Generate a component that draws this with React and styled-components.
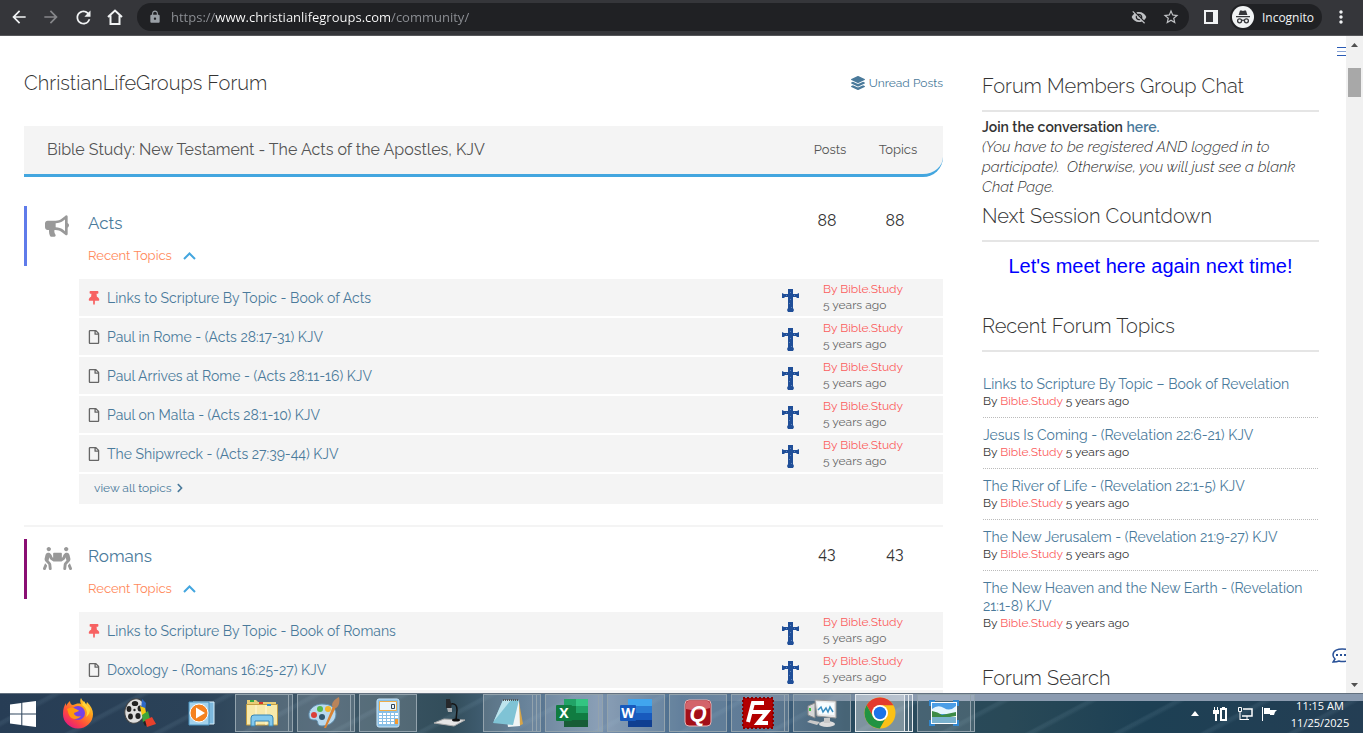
import React, {useState} from "react";
import styled, {createGlobalStyle} from "styled-components";
import {FaBullhorn, FaPeopleCarry, FaLayerGroup, FaThumbtack, FaRegFile, FaChevronRight} from "react-icons/fa";
import {MdArrowBack, MdArrowForward, MdRefresh, MdLock, MdVisibilityOff, MdStarBorder, MdMoreVert} from "react-icons/md";

const boards = [
    {
        name: "Acts",
        color: "#5f7bea",
        icon: <FaBullhorn size={24} />,
        posts: 88,
        topics: 88,
        recent: [
            {title: "Links to Scripture By Topic - Book of Acts", pinned: true},
            {title: "Paul in Rome - (Acts 28:17-31) KJV"},
            {title: "Paul Arrives at Rome - (Acts 28:11-16) KJV"},
            {title: "Paul on Malta - (Acts 28:1-10) KJV"},
            {title: "The Shipwreck - (Acts 27:39-44) KJV"},
        ],
        more: true,
    },
    {
        name: "Romans",
        color: "#8a0f73",
        icon: <FaPeopleCarry size={29} />,
        posts: 43,
        topics: 43,
        recent: [
            {title: "Links to Scripture By Topic - Book of Romans", pinned: true},
            {title: "Doxology - (Romans 16:25-27) KJV"},
        ],
    },
];

const latest = [
    "Links to Scripture By Topic – Book of Revelation",
    "Jesus Is Coming - (Revelation 22:6-21) KJV",
    "The River of Life - (Revelation 22:1-5) KJV",
    "The New Jerusalem - (Revelation 21:9-27) KJV",
    "The New Heaven and the New Earth - (Revelation 21:1-8) KJV",
];

function BrowserBar() {
    const [url, setUrl] = useState("https://www.christianlifegroups.com/community/");

    return (
        <Toolbar>
            <ToolButton aria-label="Back"><MdArrowBack size={20} /></ToolButton>
            <ToolButton aria-label="Forward" $dim><MdArrowForward size={20} /></ToolButton>
            <ToolButton aria-label="Reload"><MdRefresh size={21} /></ToolButton>
            <ToolButton aria-label="Home">
                <svg width="16" height="16" viewBox="0 0 16 16"><path d="M1 8l7-6.500L15 8M3.500 6.500V15h9V6.500" fill="none" stroke="#f1f3f4" strokeWidth="2" /></svg>
            </ToolButton>
            <AddressBar>
                <MdLock size={14} color="#9aa0a6" />
                <AddressInput aria-label="Address" value={url} onChange={(e) => setUrl(e.target.value)} />
                <ToolButton aria-label="Tracking protection" $soft><MdVisibilityOff size={16} /></ToolButton>
                <ToolButton aria-label="Bookmark" $soft><MdStarBorder size={18} /></ToolButton>
            </AddressBar>
            <ToolGroup>
                <ToolButton aria-label="Side panel">
                    <svg width="14" height="14" viewBox="0 0 14 14"><path fill="#f1f3f4" fillRule="evenodd" d="M0 0h14v14H0zM2 2v10h7V2z" /></svg>
                </ToolButton>
                <IncognitoBadge>
                    <svg width="22" height="22" viewBox="0 0 22 22">
                        <circle cx="11" cy="11" r="11" fill="#f1f3f4" />
                        <path fill="#35363a" d="M8 4.500h1.600l1.400.5 1.400-.5H14L15.400 9H6.600zM4 10h14v1.300H4z" />
                        <g fill="none" stroke="#35363a" strokeWidth="1.300">
                            <circle cx="7.600" cy="14.800" r="2" />
                            <circle cx="14.400" cy="14.800" r="2" />
                            <path d="M9.600 14.500q1.400-.8 2.800 0" />
                        </g>
                    </svg>
                    Incognito
                </IncognitoBadge>
                <ToolButton aria-label="Menu"><MdMoreVert size={20} /></ToolButton>
            </ToolGroup>
        </Toolbar>
    );
}

function Cross() {
    return (
        <svg width="17" height="23" viewBox="0 0 17 23">
            <path fill="#1f4e98" d="M6 0h5v5h4l2-1v5h-2l-1-1h-3v11l1 2-1 2H6l-1-2 1-2V8H3L2 9H0V4l2 1h4z" />
            <path fill="#5d83bd" d="M8 3h1v1H8zM4 6h1v1H4zM12 6h1v1h-1zM8 10h1v1H8zM7 14h1v1H7zM9 18h1v1H9z" />
        </svg>
    );
}

function Board({board}) {
    const [open, setOpen] = useState(true);

    return (
        <BoardSection>
            <BoardHeader $color={board.color}>
                <BoardIcon>{board.icon}</BoardIcon>
                <BoardTitle>
                    <h3><a href="#board">{board.name}</a></h3>
                    <RecentToggle aria-expanded={open} onClick={() => setOpen(!open)}>
                        Recent Topics
                        <svg width="13" height="8" viewBox="0 0 13 8"><path d="M1 7l5.500-5.500L12 7" fill="none" stroke="#43a6df" strokeWidth="2" /></svg>
                    </RecentToggle>
                </BoardTitle>
                <Count>{board.posts}</Count>
                <Count>{board.topics}</Count>
            </BoardHeader>
            {open && (
                <TopicList>
                    {board.recent.map((topic) => (
                        <TopicRow key={topic.title}>
                            {topic.pinned ? <FaThumbtack size={14} color="#f76262" /> : <FaRegFile size={14} color="#666" />}
                            <TopicLink href="#topic">{topic.title}</TopicLink>
                            <CrossBox><Cross /></CrossBox>
                            <Author>
                                <a href="#member">By Bible.Study</a>
                                <span>5 years ago</span>
                            </Author>
                        </TopicRow>
                    ))}
                    <ViewAll>
                        {board.more && <a href="#all">view all topics <FaChevronRight size={10} /></a>}
                    </ViewAll>
                </TopicList>
            )}
        </BoardSection>
    );
}

function Sidebar() {
    return (
        <Side>
            <SideHeading>Forum Members Group Chat</SideHeading>
            <ChatText>
                <b>Join the conversation <a href="#chat">here.</a></b>
                <br />
                <i>(You have to be registered AND logged in to participate).&nbsp; Otherwise, you will just see a blank Chat Page.</i>
            </ChatText>
            <SideHeading>Next Session Countdown</SideHeading>
            <Countdown>Let's meet here again next time!</Countdown>
            <SideHeading>Recent Forum Topics</SideHeading>
            <LatestList>
                {latest.map((title) => (
                    <li key={title}>
                        <a href="#topic">{title}</a>
                        <p>By <a href="#member">Bible.Study</a> 5 years ago</p>
                    </li>
                ))}
            </LatestList>
            <SideHeading>Forum Search</SideHeading>
        </Side>
    );
}

const WindowsLogo = () => (
    <svg width="26" height="26" viewBox="0 0 26 26" fill="#fff"><path d="M0 3.500l11.300-1.600v10.600H0zM12.300 1.800L26 0v12.500H12.300zM0 13.500h11.300v10.600L0 22.500zM12.300 13.500H26V26l-13.700-1.800z" /></svg>
);

const icons = {
    firefox: (
        <svg width="32" height="32" viewBox="0 0 32 32">
            <defs>
                <linearGradient id="fx" x1="1" y1="0" x2="0.2" y2="1"><stop offset="0" stopColor="#fff44f" /><stop offset=".35" stopColor="#ffa31a" /><stop offset=".7" stopColor="#ff4a3d" /><stop offset="1" stopColor="#e31587" /></linearGradient>
            </defs>
            <path fill="url(#fx)" d="M19 1c1 3 4 4 5 7l1-3c4 4 6 8 6 12a15 14.500 0 0 1-30 0c0-5 1-8 3-11v3c1-2 2-3 4-5 0 2 1 4 3 4 3-1 5-2 8-1-1-2-1-4 0-6z" />
            <circle cx="16" cy="16" r="7" fill="#7542e5" />
            <path fill="#ff980e" d="M5 12c3-2 6-2 9 0 1 1 3 1 3 2l-5 2c0 3 4 4 7 3-3 4-10 4-12-1-1-2-1-4-2-6z" />
            <path fill="#ffd43a" d="M20 8c5 3 6 8 4 12 3-2 4-5 4-8-2-3-5-5-6-8z" />
        </svg>
    ),
    movie: (
        <svg width="32" height="30" viewBox="0 0 32 30">
            <ellipse cx="11" cy="13" rx="10" ry="12.500" fill="#dedede" stroke="#444" transform="rotate(15 11 13)" />
            <g fill="#222"><ellipse cx="11" cy="5.500" rx="3.200" ry="2.600" /><ellipse cx="5" cy="11" rx="2.400" ry="3" /><ellipse cx="16" cy="10.500" rx="2.400" ry="3" /><ellipse cx="6.500" cy="18.500" rx="2.400" ry="3" /><ellipse cx="14" cy="18" rx="2.600" ry="3" /><circle cx="10.500" cy="12" r="1.200" /></g>
            <path fill="#2d68c8" d="M18 1l4 4-1 9-4-2z" />
            <path fill="#f3c914" d="M16 8l5 2 2 9-5-1z" />
            <path fill="#3fa53a" d="M18 17l6-4 2 8-7 4z" />
            <path fill="#222" d="M19 24l5-3 2 4-5 3z" />
            <path fill="#e8412c" d="M21 22l7-3 4 7-9 3z" />
        </svg>
    ),
    player: (
        <svg width="28" height="28" viewBox="0 0 28 28">
            <path fill="#7db8dd" stroke="#d9effb" d="M5 3h21v22H5z" />
            <path fill="#a3d2ec" stroke="#4b93c0" d="M1 3h20v23H1z" />
            <circle cx="11" cy="14" r="9" fill="#f58220" stroke="#fff" />
            <path fill="#fff" d="M8 8.500v11l9-5.500z" />
        </svg>
    ),
    explorer: (
        <svg width="34" height="32" viewBox="0 0 34 32">
            <path fill="#e9cd78" d="M2 3h9l2 2h18v22H2z" />
            <path fill="#f8e9ab" stroke="#c59e42" d="M1.500 7.500h31V28h-31z" />
            <path stroke="#fff8d9" d="M11 8v20M21 8v20" />
            <path fill="#37a840" d="M5 3h4v2H5z" /><path fill="#d8392b" d="M14 5h4v2h-4z" /><path fill="#2a8ddc" d="M22 7h4v2h-4z" />
            <path fill="#83c9ee" stroke="#3684b4" d="M6 29V21q0-3 3-3h16q3 0 3 3v8h-4v-5H10v5z" />
        </svg>
    ),
    paint: (
        <svg width="34" height="32" viewBox="0 0 34 32">
            <path fill="#b8d9ef" stroke="#5d8cab" d="M15 7C7 7 1 13 2 19c0 4 4 4 7 4 3 1 0 6 6 6 9 0 14-6 14-12 0-7-6-10-14-10z" />
            <circle cx="7" cy="18" r="3" fill="#db3f39" /><circle cx="13" cy="12" r="3" fill="#55b74a" /><circle cx="21" cy="12" r="3" fill="#f2b52c" /><circle cx="15" cy="20" r="3" fill="#32576f" />
            <path fill="#d98334" d="M26 9l3 1-10 21h-2z" /><path fill="#b9845b" d="M25 9c0-4 2-6 7-9 1 5 0 9-3 11z" />
        </svg>
    ),
    calculator: (
        <svg width="24" height="30" viewBox="0 0 24 30">
            <rect x="1" y="1" width="22" height="28" rx="2" fill="#88bfe6" stroke="#cbe6f8" />
            <path fill="#eaf5fb" stroke="#ecad4b" d="M3.500 3.500h17v9h-17z" />
            <path fill="none" stroke="#345" d="M15.500 6.500h3v4h-3z" />
            <g fill="#fff">{[15, 18, 21, 24].map((y) => [3, 7, 11, 15, 19].map((x) => <rect key={x + "-" + y} x={x} y={y} width="3" height="2" />))}</g>
            <path fill="#f5992e" d="M19 21h3v5h-3z" />
        </svg>
    ),
    microscope: (
        <svg width="34" height="30" viewBox="0 0 34 30">
            <path fill="#e6e6e6" stroke="#aaa" d="M1 25l10-4 21 1-11 6z" />
            <path fill="none" stroke="#141414" strokeWidth="1.500" d="M17 6c6-1 7 2 7 6l-1 10" />
            <path fill="#26282b" d="M13 1h4l1 4h1l-1 5h-5z" /><path fill="#a9adb0" d="M14 10h5v4h-4z" />
            <ellipse cx="23" cy="22" rx="4" ry="1.500" fill="#111" />
        </svg>
    ),
    notepad: (
        <svg width="34" height="30" viewBox="0 0 34 30">
            <path fill="#d6a448" d="M28 4l4 22-4 2-2-23z" />
            <path fill="#f0f5f6" d="M13 3h15l1 25-12 1z" />
            <path fill="#7fc3d5" d="M12 2h16l-6 25-20-2z" /><path fill="#bde4ed" d="M12 2h8L3 23l-1 2z" />
            <path stroke="#555" strokeWidth="2" strokeDasharray="1 1" d="M12 2h16" />
        </svg>
    ),
    excel: (
        <svg width="32" height="28" viewBox="0 0 32 28">
            <path fill="#21a366" d="M8 0h12v7H8z" /><path fill="#33c481" d="M20 0h12v7H20z" /><path fill="#107c41" d="M8 7h12v14H8z" /><path fill="#21a366" d="M20 7h12v7H20z" /><path fill="#107c41" d="M20 14h12v7H20z" /><path fill="#185c37" d="M8 21h24v7H8z" />
            <rect y="6" width="16" height="16" rx="1" fill="#107c41" />
            <text x="8" y="19" textAnchor="middle" fill="#fff" fontFamily="Open Sans, sans-serif" fontWeight="700" fontSize="14">X</text>
        </svg>
    ),
    word: (
        <svg width="32" height="28" viewBox="0 0 32 28">
            <path fill="#41a5ee" d="M8 0h24v7H8z" /><path fill="#2b7cd3" d="M8 7h24v7H8z" /><path fill="#185abd" d="M8 14h24v7H8z" /><path fill="#103f91" d="M8 21h24v7H8z" />
            <rect y="6" width="16" height="16" rx="1" fill="#185abd" />
            <text x="8" y="19" textAnchor="middle" fill="#fff" fontFamily="Open Sans, sans-serif" fontWeight="700" fontSize="14">W</text>
        </svg>
    ),
    quicken: (
        <svg width="28" height="28" viewBox="0 0 28 28">
            <rect x="1" y="1" width="26" height="26" rx="4" fill="#a30f18" stroke="#e9b3b4" />
            <path fill="#d3636a" d="M2 5q0-3 3-3h18q3 0 3 3v4Q14 13 2 10z" />
            <text x="14" y="22" textAnchor="middle" fill="#fff" fontFamily="Liberation Sans, sans-serif" fontWeight="700" fontStyle="italic" fontSize="22">Q</text>
        </svg>
    ),
    filezilla: (
        <svg width="32" height="32" viewBox="0 0 32 32">
            <rect x="1" y="1" width="30" height="30" fill="#b30000" stroke="#8a0000" strokeWidth="2" strokeDasharray="2 2" />
            <path fill="none" stroke="#fff" strokeWidth="4" d="M22 6H11L6 25M8 15h9M15 15h10L16 26h10" />
        </svg>
    ),
    monitor: (
        <svg width="32" height="30" viewBox="0 0 32 30">
            <path fill="#d7d7d7" stroke="#888" d="M2 8l7-3v15l-7-3z" /><path fill="#43c341" d="M3 10h2v3H3z" />
            <path fill="#e8e8e8" stroke="#999" d="M9 2l21 1v17l-19-2z" /><path fill="#f8fdff" d="M11 4l17 1v12l-15-1z" />
            <path fill="none" stroke="#3b8ec0" strokeWidth="1.500" d="M12 12l3-3 2 5 3-4 2 4 2-5 3 5" />
            <ellipse cx="21" cy="26" rx="8" ry="3" fill="#dcdcdc" /><path fill="#c8c8c8" d="M18 20h6v5h-6zM4 22l10 2-3 3-10-3z" />
        </svg>
    ),
    chrome: (
        <svg width="32" height="32" viewBox="0 0 32 32">
            <circle cx="16" cy="16" r="15.500" fill="#fbc116" />
            <path fill="#e33b2e" d="M2.600 8.200a15.500 15.500 0 0 1 26.800 0H16a7.800 7.800 0 0 0-6.700 11.700z" />
            <path fill="#229342" d="M2.600 8.200l6.700 11.700a7.800 7.800 0 0 0 10.600 2.800l2.600-3-6.700 11.800A15.500 15.500 0 0 1 2.600 8.200z" />
            <circle cx="16" cy="16" r="8" fill="#fff" /><circle cx="16" cy="16" r="6.200" fill="#1a73e8" />
        </svg>
    ),
    picture: (
        <svg width="30" height="26" viewBox="0 0 30 26">
            <path fill="#fff" d="M2 2h26v22H2z" /><path fill="#4a9de6" d="M3 3h24v12H3z" /><path fill="#e4f4fd" d="M3 9q6-5 12-1t12-2v8H3z" />
            <path fill="#3c8a45" d="M3 11q6 1 10 4l14-3v4l-12 2H3z" /><path fill="#79b1cd" d="M3 17h24v6H3z" />
            <path fill="none" stroke="#3187cf" strokeWidth="2" d="M1 6V1h5M24 1h5v5M29 20v5h-5M6 25H1v-5" />
        </svg>
    ),
};

const tasks = [
    {name: "firefox"},
    {name: "movie"},
    {name: "player"},
    {name: "explorer", running: true, stack: 1},
    {name: "paint", running: true, stack: 1},
    {name: "calculator", running: true},
    {name: "microscope"},
    {name: "notepad", running: true, stack: 2},
    {name: "excel", running: true, stack: 1},
    {name: "word", running: true},
    {name: "quicken", running: true},
    {name: "filezilla", running: true, stack: 1},
    {name: "monitor", running: true},
    {name: "chrome", running: true, stack: 2, active: true},
    {name: "picture", running: true, stack: 1},
];

function Taskbar() {
    return (
        <TaskbarRow>
            <StartButton aria-label="Start"><WindowsLogo /></StartButton>
            {tasks.map((task) => (
                <TaskButton key={task.name} aria-label={task.name}>
                    <TaskFace $running={task.running} $active={task.active}>{icons[task.name]}</TaskFace>
                    {Array.from({length: task.stack || 0}, (_, i) => <StackEdge key={i} $active={task.active} />)}
                </TaskButton>
            ))}
            <Tray>
                <TrayToggle aria-label="Show hidden icons">
                    <svg width="8" height="5" viewBox="0 0 8 5"><path fill="#fff" d="M4 0l4 5H0z" /></svg>
                </TrayToggle>
                <svg width="15" height="16" viewBox="0 0 15 16" fill="none" stroke="#fff">
                    <path fill="#fff" stroke="none" d="M1 1h1v3h2V1h1v3h1v4H4v7H2V8H0V4h1z" />
                    <path strokeWidth="2" d="M8 3h5v11H8z" /><path d="M9 1.500h3" />
                </svg>
                <svg width="16" height="15" viewBox="0 0 16 15" fill="none" stroke="#fff">
                    <path strokeWidth="1.500" d="M6 3h9v7H5" /><path d="M1.500 1.500h3v4h-3zM3 6v8M3 13.500h9M10 10v3" />
                </svg>
                <svg width="15" height="15" viewBox="0 0 15 15" fill="#fff"><path d="M0 1h1v14H0zM2 2h6v2h7l-2 2-1 3H8V8H2z" /></svg>
            </Tray>
            <Clock>
                <span>11:15 AM</span>
                <span>11/25/2025</span>
            </Clock>
        </TaskbarRow>
    );
}

export default function App() {
    return (
        <>
            <GlobalStyle />
            <Screen>
                <BrowserBar />
                <Viewport>
                    <Page>
                        <Forum>
                            <ForumHeader>
                                <h1>ChristianLifeGroups Forum</h1>
                                <a href="#unread"><FaLayerGroup size={14} />Unread Posts</a>
                            </ForumHeader>
                            <Category>
                                <h2>Bible Study: New Testament - The Acts of the Apostles, KJV</h2>
                                <span>Posts</span>
                                <span>Topics</span>
                            </Category>
                            {boards.map((board) => <Board key={board.name} board={board} />)}
                        </Forum>
                        <Sidebar />
                        <MenuTab aria-label="Open menu">
                            <svg width="9" height="10" viewBox="0 0 9 10"><path fill="#2a5bb5" d="M0 1h9v1H0zM0 9h9v1H0z" /><path fill="#8aa5d6" d="M0 5h9v1H0z" /></svg>
                        </MenuTab>
                        <ChatTab aria-label="Open chat">
                            <svg width="14" height="15" viewBox="0 0 14 15">
                                <path fill="none" stroke="#2a5298" strokeWidth="1.500" d="M14 1.200C5 0 1 3 1 7c0 2 1 3 2 4l-2 3c3 0 4 0 6-1 2 .6 5 .6 7 .2" />
                                <path fill="#2a5298" d="M4 6h2v2H4zM8 6h2v2H8zM12 6h2v2h-2z" />
                            </svg>
                        </ChatTab>
                    </Page>
                    <Scrollbar>
                        <button aria-label="Scroll up"><svg width="7" height="4" viewBox="0 0 7 4"><path fill="#505050" d="M3.500 0L7 4H0z" /></svg></button>
                        <Track><Thumb /></Track>
                        <button aria-label="Scroll down"><svg width="7" height="4" viewBox="0 0 7 4"><path fill="#505050" d="M0 0h7L3.500 4z" /></svg></button>
                    </Scrollbar>
                </Viewport>
                <Taskbar />
            </Screen>
        </>
    );
}

const GlobalStyle = createGlobalStyle`
    * {
        box-sizing: border-box;
    }
    body {
        margin: 0;
        font-family: Raleway, Lato, sans-serif;
        font-weight: 400;
        color: #333;
        background: #fff;
    }
    h1, h2, h3, p, ul {
        margin: 0;
        padding: 0;
        font-weight: 400;
    }
    ul {
        list-style: none;
    }
    a {
        color: #4a7a9b;
        text-decoration: none;
    }
    button {
        display: flex;
        align-items: center;
        justify-content: center;
        padding: 0;
        border: 0;
        background: none;
        color: inherit;
        font: inherit;
        cursor: pointer;
    }
    svg {
        display: block;
        flex: none;
    }
`;

const Screen = styled.div`
    display: grid;
    grid-template-rows: auto 1fr auto;
    height: 100vh;
    overflow: hidden;
`;

const Toolbar = styled.header`
    display: flex;
    align-items: center;
    gap: 12px;
    padding: 3px 12px 4px 9px;
    background: #35363a;
    border-bottom: 1px solid #56575a;
    font-family: "Open Sans", "Noto Sans", sans-serif;
    color: #f1f3f4;
`;

const ToolGroup = styled.div`
    display: flex;
    align-items: center;
    gap: 9px;
`;

const ToolButton = styled.button`
    width: 20px;
    height: 20px;
    color: ${({$dim, $soft}) => ($dim ? "#86878a" : $soft ? "#c0c2c5" : "#f1f3f4")};
`;

const AddressBar = styled.div`
    flex: 1;
    display: flex;
    align-items: center;
    gap: 12px;
    height: 28px;
    padding: 0 8px 0 11px;
    border-radius: 14px;
    background: #202124;
`;

const AddressInput = styled.input`
    flex: 1;
    min-width: 0;
    padding: 0;
    border: 0;
    outline: 0;
    margin-left: -3px;
    font-family: inherit;
    font-size: 13px;
    line-height: 20px;
    color: transparent;
    background: linear-gradient(90deg, #8e9196 44px, #fff 44px, #fff 220px, #8e9196 220px);
    background-clip: text;
`;

const IncognitoBadge = styled.div`
    display: flex;
    align-items: center;
    gap: 8px;
    height: 26px;
    padding: 0 8px 0 2px;
    border-radius: 13px;
    background: #202124;
    font-size: 12px;
`;

const Viewport = styled.div`
    display: flex;
    min-height: 0;
`;

const Page = styled.main`
    position: relative;
    flex: 1;
    display: grid;
    grid-template-columns: 919fr 337fr;
    column-gap: 39px;
    align-items: start;
    padding: 0 27px 0 24px;
    overflow: hidden;
`;

const Forum = styled.section`
    padding-top: 35px;
`;

const ForumHeader = styled.div`
    display: flex;
    align-items: center;
    justify-content: space-between;
    margin-bottom: 31px;
    h1 {
        font-size: 20px;
        font-weight: 300;
        line-height: 24px;
    }
    a {
        display: flex;
        align-items: center;
        gap: 4px;
        font-size: 12px;
    }
`;

const Category = styled.div`
    display: grid;
    grid-template-columns: 1fr 68px 68px;
    align-items: center;
    height: 51px;
    margin-bottom: 29px;
    padding: 0 11px 1px 23px;
    border-bottom: 3px solid #43a6df;
    border-bottom-right-radius: 20px;
    background: #f4f4f4;
    color: #555;
    h2 {
        font-size: 16px;
    }
    span {
        font-size: 13px;
        text-align: center;
    }
`;

const BoardSection = styled.section`
    & + & {
        margin-top: 21px;
        padding-top: 12px;
        border-top: 2px solid #f4f4f4;
    }
`;

const BoardHeader = styled.div`
    display: grid;
    grid-template-columns: 61px 1fr 68px 68px;
    height: 60px;
    padding-right: 14px;
    border-left: 3px solid ${({$color}) => $color};
`;

const BoardIcon = styled.div`
    display: flex;
    justify-content: center;
    align-items: center;
    width: 60px;
    height: 39px;
    color: #999;
`;

const BoardTitle = styled.div`
    h3 {
        padding: 5px 0 11px;
        font-size: 17px;
        line-height: 24px;
    }
`;

const RecentToggle = styled.button`
    gap: 11px;
    font-size: 13px;
    line-height: 20px;
    color: #ff8a5c;
`;

const Count = styled.div`
    padding-top: 4px;
    font-size: 16px;
    line-height: 22px;
    text-align: center;
`;

const TopicList = styled.ul`
    display: grid;
    gap: 2px;
    margin: 13px 0 0 55px;
`;

const TopicRow = styled.li`
    display: grid;
    grid-template-columns: 14px 1fr 17px 144px;
    align-items: center;
    height: 37px;
    padding-left: 8px;
    background: #f4f4f4;
`;

const TopicLink = styled.a`
    padding-left: 6px;
    font-size: 14px;
    line-height: 20px;
`;

const CrossBox = styled.span`
    padding-top: 6px;
`;

const Author = styled.div`
    display: grid;
    padding: 0 0 2px 24px;
    font-size: 12px;
    line-height: 16px;
    color: #666;
    a {
        color: #fb5d5d;
    }
`;

const ViewAll = styled.li`
    height: 30px;
    padding: 4px 15px;
    background: #f4f4f4;
    a {
        display: flex;
        align-items: center;
        gap: 3px;
        font-size: 12px;
        line-height: 20px;
    }
`;

const Side = styled.aside`
    padding-top: 38px;
`;

const SideHeading = styled.h2`
    padding-bottom: 12px;
    border-bottom: 2px solid #e5e5e5;
    font-size: 20px;
    font-weight: 300;
    line-height: 24px;
`;

const ChatText = styled.p`
    padding: 5px 0 7px;
    font-size: 15px;
    font-weight: 300;
    line-height: 20px;
    b {
        font-size: 14px;
        font-weight: 600;
    }
`;

const Countdown = styled.p`
    padding: 12px 0 36px;
    font-family: "Liberation Sans", Arial, sans-serif;
    font-size: 20px;
    line-height: 24px;
    text-align: center;
    color: #00f;
`;

const LatestList = styled.ul`
    padding: 15px 1px 27px;
    li {
        padding: 8px 0;
        font-size: 14px;
        line-height: 18px;
    }
    li + li {
        border-top: 1px dotted #bbb;
    }
    p {
        font-size: 12px;
        line-height: 16px;
    }
    p a {
        color: #fb5d5d;
    }
`;

/* tabs pinned over the right edge of the page */
const MenuTab = styled.button`
    position: absolute;
    top: 10px;
    right: 0;
`;

const ChatTab = styled.button`
    position: absolute;
    right: 0;
    bottom: 30px;
`;

const Scrollbar = styled.div`
    display: flex;
    flex-direction: column;
    width: 17px;
    background: #f1f1f1;
    button {
        width: 17px;
        height: 17px;
    }
`;

const Track = styled.div`
    flex: 1;
    padding: 15px 2px;
`;

const Thumb = styled.div`
    height: 29px;
    background: #a8a8a8;
`;

const TaskbarRow = styled.footer`
    display: flex;
    align-items: stretch;
    height: 40px;
    border-top: 1px solid #63717f;
    background-color: #2b4459;
    background-image:
        linear-gradient(90deg, rgba(139, 155, 176, 0) 50%, #8b9bb0 66%),
        repeating-linear-gradient(152deg, transparent 0 23px, rgba(150, 185, 205, 0.1) 25px 27px, transparent 30px 41px),
        linear-gradient(90deg, #273d55 0%, #2b4258 14%, #40596a 24%, #324d5a 33%, #4d6c87 38%, #7890ab 44%, #4a6c8c 50%, #456584 56%, #294b60 62%, #294957 74%, #1d4054 84%, #243e54 100%);
    background-size: 100% 7px, 100% 100%, 100% 100%;
    background-repeat: no-repeat;
    font-family: "Open Sans", "Noto Sans", sans-serif;
    color: #fff;
`;

const StartButton = styled.button`
    width: 45px;
    margin-right: 2px;
`;

const TaskButton = styled.button`
    width: 62px;
    padding: 0 2px;
    align-items: stretch;
`;

const TaskFace = styled.span`
    flex: 1;
    display: flex;
    align-items: center;
    justify-content: center;
    margin-bottom: 1px;
    border: 1px solid ${({$running, $active}) => ($active ? "#e8edf0" : $running ? "#93a3ad" : "transparent")};
    background: ${({$running, $active}) => ($active ? "rgba(255, 255, 255, 0.4)" : $running ? "rgba(255, 255, 255, 0.14)" : "none")};
`;

const StackEdge = styled.span`
    width: 4px;
    margin-bottom: 1px;
    border: 1px solid ${({$active}) => ($active ? "#e8edf0" : "#93a3ad")};
    border-left: 0;
    background: rgba(255, 255, 255, 0.14);
`;

const Tray = styled.div`
    display: flex;
    align-items: center;
    gap: 9px;
    margin-left: auto;
`;

const TrayToggle = styled.button`
    width: 18px;
    height: 20px;
`;

const Clock = styled.time`
    display: grid;
    align-content: center;
    width: 86px;
    font-size: 11px;
    line-height: 17px;
    text-align: center;
`;
